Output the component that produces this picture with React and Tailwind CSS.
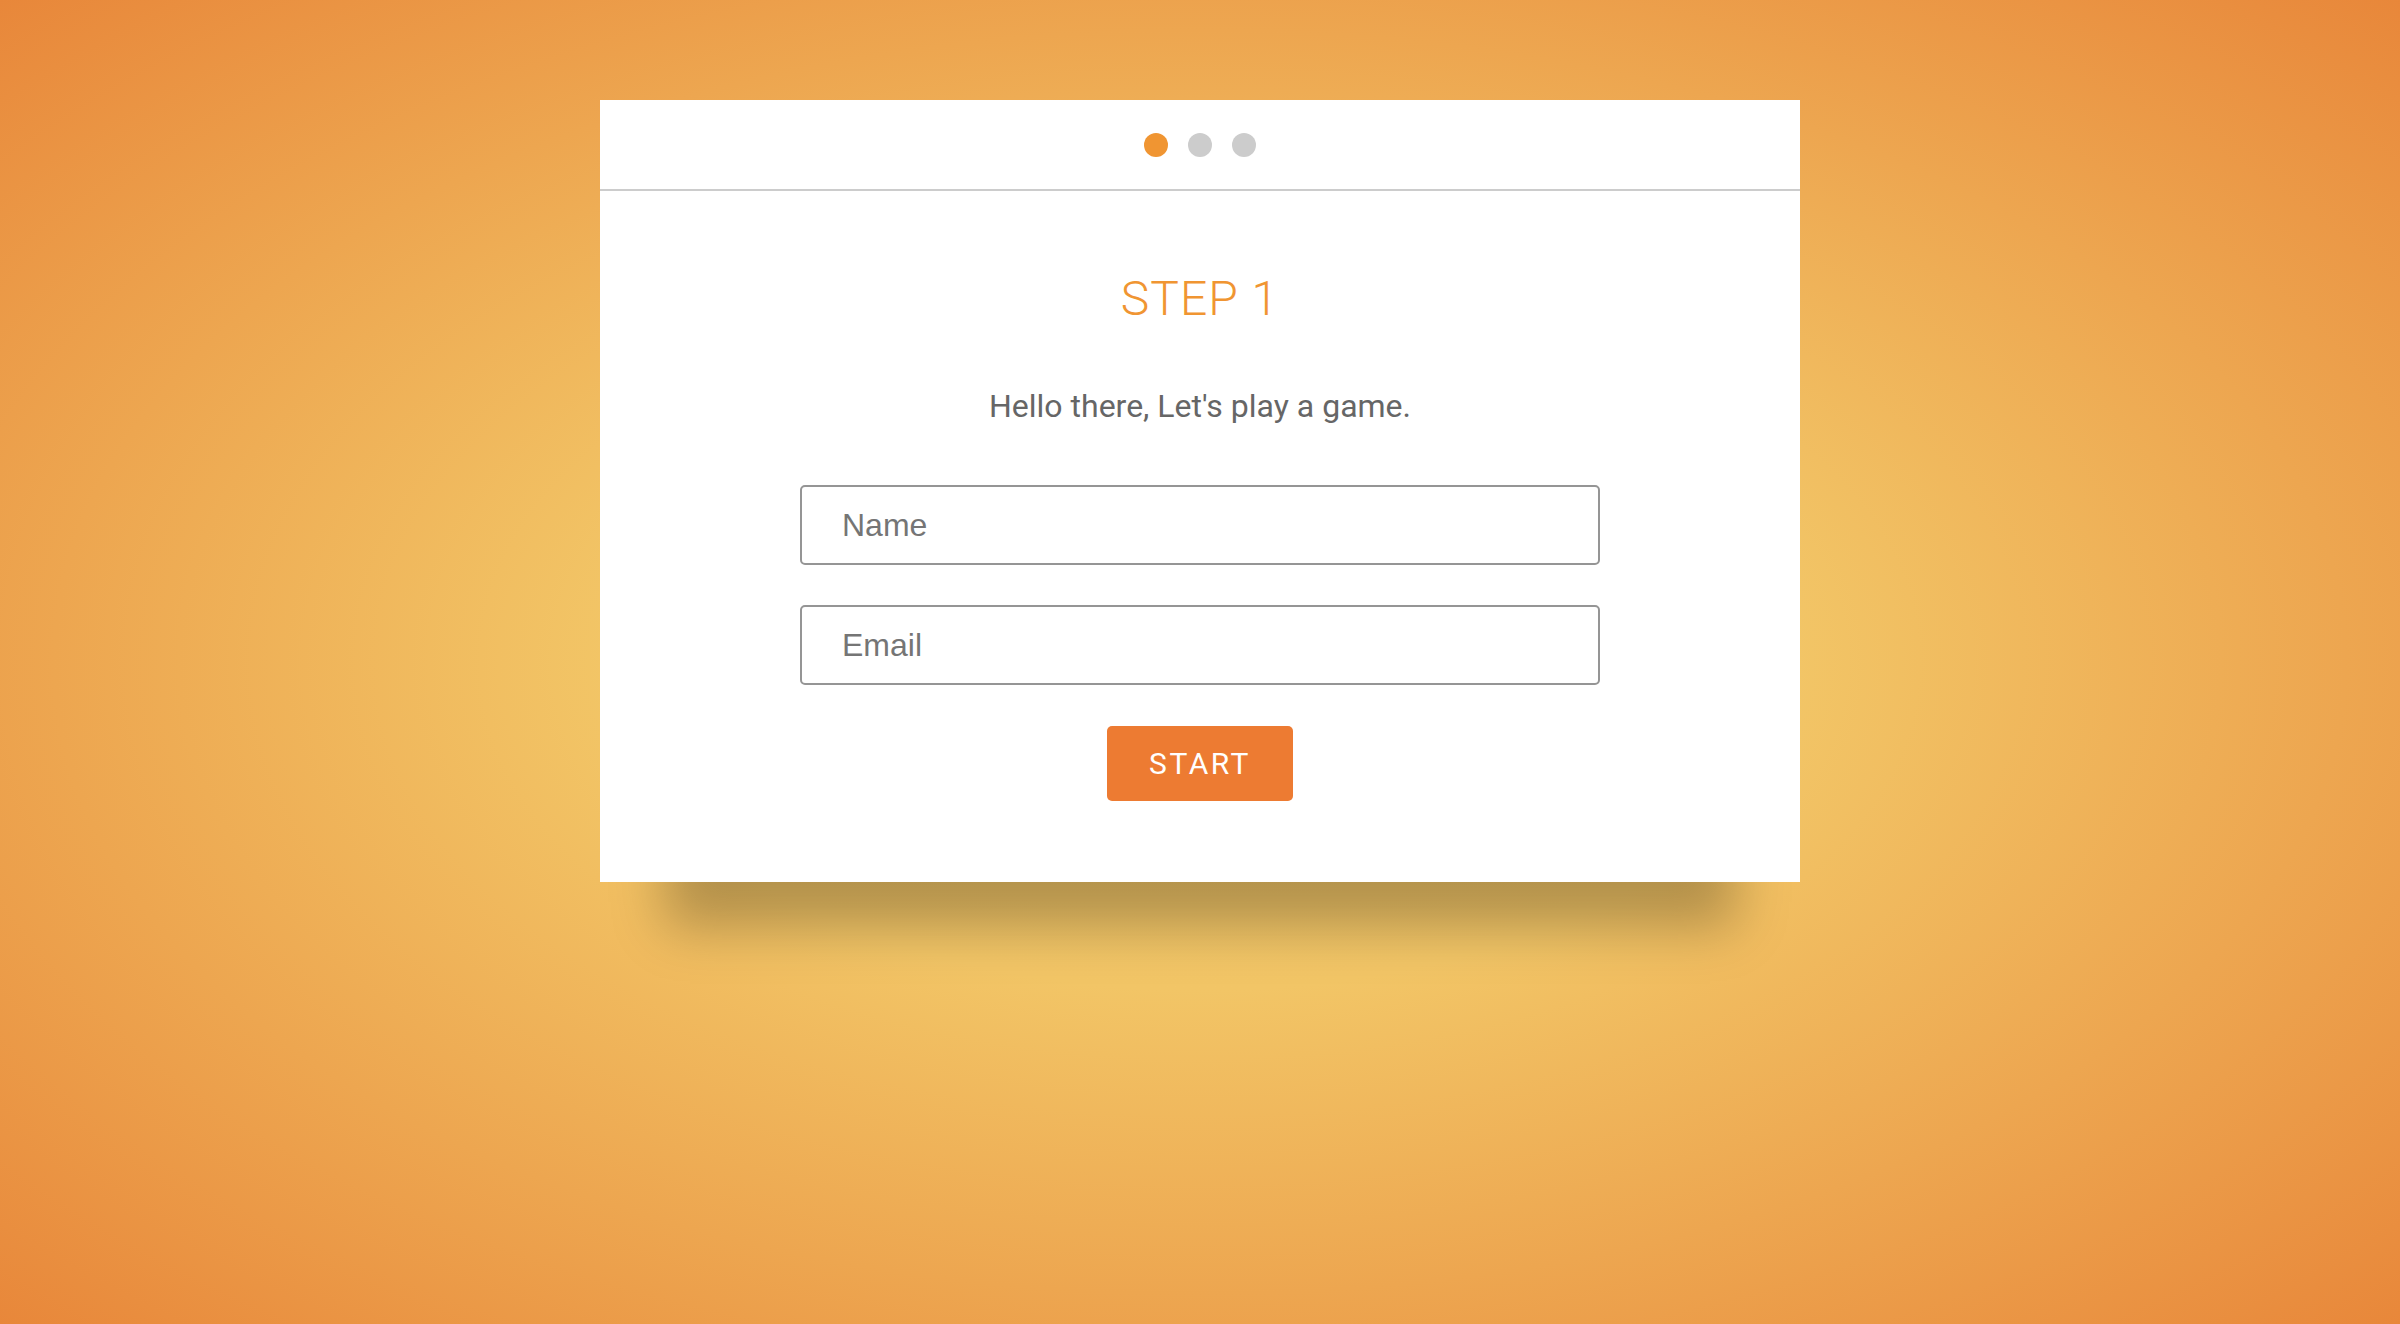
import React from "react";

export default function App() {
  return (
    <div
      className="min-h-screen w-full flex flex-col items-center bg-[radial-gradient(ellipse_at_center,#f3c96a_0%,#f2c566_35%,#e8873a_100%)]"
      style={{ fontFamily: "Roboto, 'Liberation Sans', sans-serif" }}
    >
      <div className="mt-[100px] w-[1200px] bg-white flex flex-col shadow-[0_110px_50px_-65px_rgba(0,0,0,0.26)]">
        <div className="h-[91px] border-b-2 border-[#cccccc] flex items-center justify-center gap-[20px]">
          <span className="w-[24px] h-[24px] rounded-full bg-[#f09532]" />
          <span className="w-[24px] h-[24px] rounded-full bg-[#cccccc]" />
          <span className="w-[24px] h-[24px] rounded-full bg-[#cccccc]" />
        </div>
        <div className="flex flex-col items-center pt-[84px] pb-[81px]">
          <h1 className="text-[48px] leading-[48px] font-light tracking-[1px] text-[#f09532]">STEP 1</h1>
          <p className="mt-[67px] text-[32px] leading-[32px] text-[#666666]">
            Hello there, Let's play a game.
          </p>
          <input
            type="text"
            placeholder="Name"
            className="mt-[63px] w-[800px] h-[80px] border-2 border-[#959595] rounded-[5px] pl-[40px] text-[32px] text-[#444] placeholder:text-[#757575] outline-none"
            style={{ fontFamily: "'Liberation Sans', Arial, sans-serif" }}
          />
          <input
            type="email"
            placeholder="Email"
            className="mt-[40px] w-[800px] h-[80px] border-2 border-[#959595] rounded-[5px] pl-[40px] text-[32px] text-[#444] placeholder:text-[#757575] outline-none"
            style={{ fontFamily: "'Liberation Sans', Arial, sans-serif" }}
          />
          <button className="mt-[41px] w-[186px] h-[75px] rounded-[5px] bg-[#ed7b32] text-white text-[30px] leading-[30px] tracking-[2.5px] flex items-center justify-center">
            START
          </button>
        </div>
      </div>
    </div>
  );
}
